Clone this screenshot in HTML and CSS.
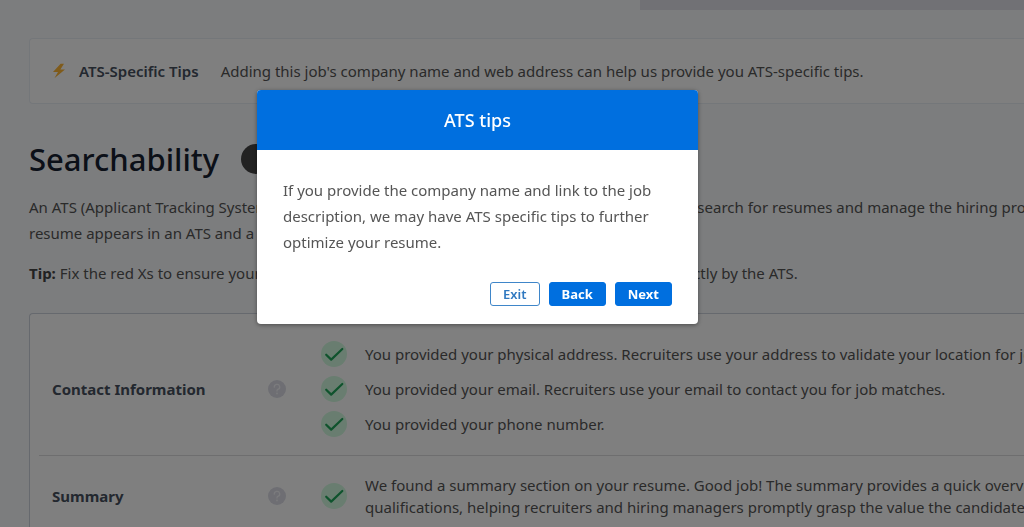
FILE: index.html
```html
<!DOCTYPE html>
<html lang="en">

<head>
  <meta charset="utf-8">
  <title>Match report</title>
  <link rel="stylesheet" href="styles.css">
</head>

<body>
  <svg class="sprite" aria-hidden="true">
    <symbol id="check" viewBox="0 0 26 26">
      <circle cx="13" cy="13" r="13" fill="#d2fbe0" />
      <path d="M5.2 13.7 L10.2 18.6 L21.3 8" fill="none" stroke="#1fa65a" stroke-width="2.2" stroke-linecap="round" stroke-linejoin="round" />
    </symbol>
    <symbol id="help" viewBox="0 0 18 18">
      <circle cx="9" cy="9" r="9" fill="#dcdde6" />
      <path d="M6.3 7.2 A2.7 2.5 0 1 1 9.8 9.3 Q9 9.6 9 10.9" fill="none" stroke="#f6f6fa" stroke-width="1.3" stroke-linecap="round" />
      <circle cx="9" cy="13.4" r="0.9" fill="#f6f6fa" />
    </symbol>
  </svg>

  <div class="top-bar"></div>

  <main class="report">
    <div class="banner">
      <svg class="bolt" viewBox="0 0 14 16" aria-hidden="true">
        <path d="M8.6 0.8 L1 9 L6 8.9 L2.4 15.2 L13 6.4 L8.4 6.4 L12 0.8 Z" fill="#ffb637" />
      </svg>
      <strong class="banner-title">ATS-Specific Tips</strong>
      <span>Adding this job's company name and web address can help us provide you ATS-specific tips.</span>
    </div>

    <div class="heading">
      <h1>Searchability</h1>
      <span class="badge"></span>
    </div>

    <p class="intro">An ATS (Applicant Tracking System) is the software used by 90% of companies and recruiters to search for resumes and manage the hiring process. Below is how well your<br>
      resume appears in an ATS and a recruiter search.</p>
    <p class="intro"><b>Tip:</b> Fix the red Xs to ensure your resume is easily searchable by all recruiters and parsed correctly by the ATS.</p>

    <div class="checks">
      <section class="row">
        <h2>Contact Information</h2>
        <button class="help" type="button" aria-label="About contact information"><svg><use href="#help" /></svg></button>
        <ul>
          <li><svg class="check"><use href="#check" /></svg>You provided your physical address. Recruiters use your address to validate your location for job matches.</li>
          <li><svg class="check"><use href="#check" /></svg>You provided your email. Recruiters use your email to contact you for job matches.</li>
          <li><svg class="check"><use href="#check" /></svg>You provided your phone number.</li>
        </ul>
      </section>
      <section class="row">
        <h2>Summary</h2>
        <button class="help" type="button" aria-label="About summary"><svg><use href="#help" /></svg></button>
        <ul>
          <li><svg class="check"><use href="#check" /></svg><span>We found a summary section on your resume. Good job! The summary provides a quick overview of the candidate's<br>
            qualifications, helping recruiters and hiring managers promptly grasp the value the candidate can offer.</span></li>
        </ul>
      </section>
    </div>
  </main>

  <div class="overlay"></div>

  <div class="modal" role="dialog" aria-labelledby="modal-title">
    <h2 class="modal-title" id="modal-title">ATS tips</h2>
    <div class="modal-body">
      <p>If you provide the company name and link to the job description, we may have ATS specific tips to further optimize your resume.</p>
      <div class="modal-buttons">
        <button class="btn btn-outline" type="button">Exit</button>
        <button class="btn" type="button">Back</button>
        <button class="btn" type="button">Next</button>
      </div>
    </div>
  </div>
</body>

</html>
```

FILE: styles.css
```css
* {
  box-sizing: border-box;
}

body {
  margin: 0;
  height: 100vh;
  overflow: hidden;
  background: #f8fafc;
  color: #555;
  font-family: "Noto Sans", "Open Sans", sans-serif;
  font-size: 15px;
  line-height: 26px;
}

h1,
h2,
p,
ul {
  margin: 0;
  padding: 0;
}

.sprite {
  display: block;
  width: 0;
  height: 0;
}

.top-bar {
  height: 10px;
  margin-left: 62.5%;
  background: #e3e3ea;
}

/* the report is wider than the window, so its lines run off the right edge */
.report {
  padding: 28px 0 0 29px;
  white-space: nowrap;
}

.banner {
  display: flex;
  align-items: center;
  height: 66px;
  padding-left: 22px;
  background: #fff;
  border: 1px solid #e9eef4;
  border-right: 0;
  border-radius: 4px 0 0 4px;
}

.bolt {
  width: 14px;
  height: 16px;
  margin-right: 13px;
}

.banner-title {
  margin-right: 22px;
  color: #47505e;
  font-weight: 600;
}

.heading {
  display: flex;
  align-items: center;
  gap: 22px;
  height: 44px;
  margin: 33px 0 13px;
}

h1 {
  color: #172030;
  font-size: 31px;
  font-weight: 500;
  line-height: 44px;
}

.badge {
  width: 30px;
  height: 30px;
  border-radius: 50%;
  background: #444;
}

.intro {
  margin-bottom: 14px;
}

.intro b {
  color: #444;
}

.checks {
  margin-top: 27px;
  padding: 9px 0 9px 9px;
  background: #fff;
  border: 1px solid #ccd2dc;
  border-right: 0;
  border-radius: 4px 0 0 0;
}

.row {
  display: grid;
  grid-template-columns: 216px 53px 1fr;
  align-items: center;
  padding: 18px 0 18px 13px;
  line-height: 22px;
}

.row + .row {
  border-top: 1px solid #dcdcdf;
}

.row h2 {
  color: #47505e;
  font-size: 15px;
  font-weight: 700;
}

.help {
  width: 18px;
  height: 18px;
  padding: 0;
  background: none;
  border: 0;
}

.help svg {
  display: block;
  width: 18px;
  height: 18px;
}

.row ul {
  display: grid;
  gap: 9px;
  list-style: none;
}

.row li {
  display: flex;
  align-items: center;
  gap: 18px;
}

.check {
  flex: none;
  width: 26px;
  height: 26px;
}

.overlay {
  position: fixed;
  inset: 0;
  background: rgba(0, 0, 0, 0.5);
}

.modal {
  position: absolute;
  top: 90px;
  left: 257px;
  width: 441px;
  overflow: hidden;
  background: #fff;
  border-radius: 4px;
  box-shadow: 0 1px 4px rgba(0, 0, 0, 0.4);
}

.modal-title {
  background: #006fdf;
  color: #fff;
  font-size: 18px;
  font-weight: 500;
  line-height: 60px;
  text-align: center;
}

.modal-body {
  padding: 27px 26px 18px;
}

.modal-buttons {
  display: flex;
  justify-content: flex-end;
  gap: 9px;
  margin-top: 27px;
}

.btn {
  height: 24px;
  padding: 0 12px;
  background: #006fdf;
  border: 1px solid #006fdf;
  border-radius: 3px;
  color: #fff;
  font-family: inherit;
  font-size: 13px;
  font-weight: 700;
  line-height: 20px;
}

.btn-outline {
  background: #fff;
  border-color: #3f86c9;
  color: #2f78c0;
  font-weight: 600;
}
```
